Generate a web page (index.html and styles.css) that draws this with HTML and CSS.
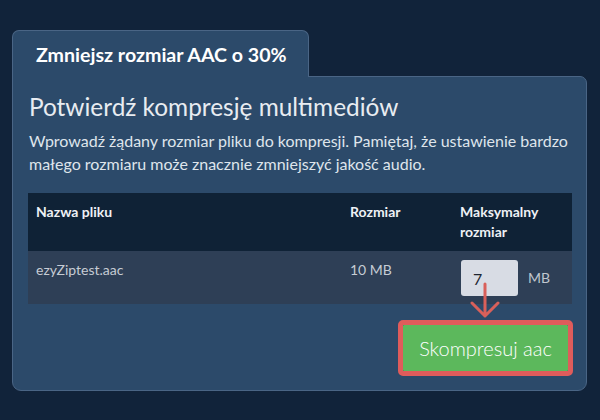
FILE: index.html
```html
<!DOCTYPE html>
<html lang="pl">
<head>
<meta charset="utf-8">
<link rel="stylesheet" href="styles.css">
</head>
<body>
<div class="wrap">
  <div class="tab">Zmniejsz rozmiar AAC o 30%</div>
  <div class="panel">
    <h1 class="title">Potwierdź kompresję multimediów</h1>
    <p class="desc">Wprowadź żądany rozmiar pliku do kompresji. Pamiętaj, że ustawienie bardzo małego rozmiaru może znacznie zmniejszyć jakość audio.</p>
    <table class="files">
      <thead>
        <tr>
          <th class="c-name">Nazwa pliku</th>
          <th class="c-size">Rozmiar</th>
          <th class="c-max">Maksymalny rozmiar</th>
        </tr>
      </thead>
      <tbody>
        <tr>
          <td class="c-name">ezyZiptest.aac</td>
          <td class="c-size">10 MB</td>
          <td class="c-max">
            <div class="maxcell">
              <input class="size-input" type="text" value="7">
              <span class="unit">MB</span>
              <svg class="arrow" width="30" height="40" viewBox="0 0 30 40">
                <path d="M15 2 V34 M2 21 L15 34 L28 21" fill="none" stroke="#d9605a" stroke-width="3" stroke-linecap="round" stroke-linejoin="round"/>
              </svg>
            </div>
          </td>
        </tr>
      </tbody>
    </table>
    <div class="actions">
      <div class="highlight"><button class="btn" type="button">Skompresuj aac</button></div>
    </div>
  </div>
</div>
</body>
</html>
```

FILE: styles.css
```css
html, body {
  margin: 0;
  padding: 0;
  background: #11233a;
  font-family: Lato, "Noto Sans", sans-serif;
}
.wrap {
  padding: 30px 0 0 12px;
  width: 575px;
}
.tab {
  position: relative;
  z-index: 1;
  display: inline-block;
  box-sizing: border-box;
  width: 297px;
  height: 47px;
  margin-bottom: -1px;
  padding: 12px 0 0 23px;
  background: #2c4a6a;
  border: 1px solid #4a6585;
  border-bottom: none;
  border-radius: 7px 7px 0 0;
  color: #ffffff;
  font-size: 19.6px;
  font-weight: 700;
  line-height: 24px;
  vertical-align: top;
}
.panel {
  box-sizing: border-box;
  width: 575px;
  height: 315px;
  padding: 0 14px 0 16px;
  background: #2c4a6a;
  border: 1px solid #4a6585;
  border-radius: 0 7px 9px 9px;
}
.title {
  margin: 14px 0 0 0;
  color: #e8ecf1;
  font-size: 24.4px;
  font-weight: 400;
  line-height: 32px;
}
.desc {
  margin: 6px 0 0 0;
  color: #dfe5ec;
  font-size: 16px;
  line-height: 23px;
}
.files {
  margin: 18px 0 0 -1px;
  width: 544px;
  border-collapse: collapse;
  font-size: 14px;
  line-height: 20px;
}
.files th {
  background: #0f2236;
  color: #eef1f5;
  font-weight: 700;
  text-align: left;
  vertical-align: top;
  padding: 9px 8px 9px 8px;
}
.files td {
  background: #2e3f56;
  color: #c6ccd4;
  vertical-align: top;
  padding: 9px 8px 8px 8px;
}
.c-name { width: 298px; }
.c-size { width: 94px; }
.c-max { width: 104px; }
.maxcell {
  position: relative;
  display: flex;
  align-items: center;
  gap: 10px;
}
.size-input {
  box-sizing: border-box;
  width: 57px;
  height: 36px;
  margin: 0 0 0 1px;
  padding: 0 0 0 12px;
  border: none;
  border-radius: 3px;
  background: #d8dce4;
  color: #1e2530;
  font-family: Lato, "Noto Sans", sans-serif;
  font-size: 16px;
  outline: none;
}
.unit {
  color: #c0c6ce;
  font-size: 14px;
}
.arrow {
  position: absolute;
  left: 10px;
  top: 22px;
}
.actions {
  display: flex;
  justify-content: flex-end;
  margin: 16px -1px 0 0;
}
.highlight {
  border: 5px solid #df5c5b;
  border-radius: 5px;
}
.btn {
  display: block;
  width: 165px;
  height: 46px;
  border: none;
  border-radius: 1px;
  background: #5cb85c;
  color: #ffffff;
  font-family: Lato, "Noto Sans", sans-serif;
  font-size: 20px;
  font-weight: 300;
  padding: 0;
}
```
